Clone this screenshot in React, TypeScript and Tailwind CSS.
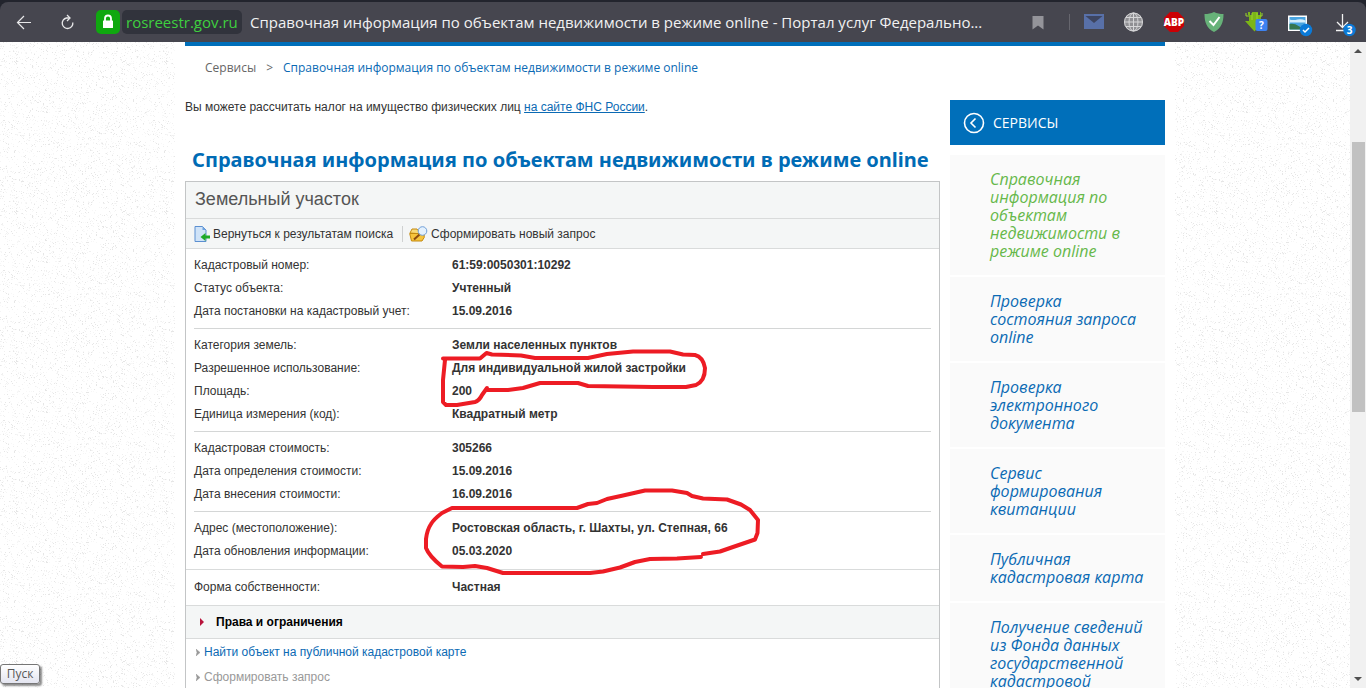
import type { ReactNode } from 'react';

type Row = [label: string, value: string];

const sections: Row[][] = [
  [
    ['Кадастровый номер:', '61:59:0050301:10292'],
    ['Статус объекта:', 'Учтенный'],
    ['Дата постановки на кадастровый учет:', '15.09.2016'],
  ],
  [
    ['Категория земель:', 'Земли населенных пунктов'],
    ['Разрешенное использование:', 'Для индивидуальной жилой застройки'],
    ['Площадь:', '200'],
    ['Единица измерения (код):', 'Квадратный метр'],
  ],
  [
    ['Кадастровая стоимость:', '305266'],
    ['Дата определения стоимости:', '15.09.2016'],
    ['Дата внесения стоимости:', '16.09.2016'],
  ],
  [
    ['Адрес (местоположение):', 'Ростовская область, г. Шахты, ул. Степная, 66'],
    ['Дата обновления информации:', '05.03.2020'],
  ],
];

const services = [
  'Справочная\nинформация по\nобъектам\nнедвижимости в\nрежиме online',
  'Проверка\nсостояния запроса\nonline',
  'Проверка\nэлектронного\nдокумента',
  'Сервис\nформирования\nквитанции',
  'Публичная\nкадастровая карта',
  'Получение сведений\nиз Фонда данных\nгосударственной\nкадастровой',
];

// Speckles for the page background, same tile on every render
const TILE = 150;
const speckles = (() => {
  let seed = 7;
  const next = () => {
    seed = (seed * 16807) % 2147483647;
    return seed / 2147483647;
  };
  return Array.from({ length: 3000 }, () => ({
    x: Math.floor(next() * TILE),
    y: Math.floor(next() * TILE),
    fill: ['#f5f5f5', '#f8f8f8', '#f0f0f0', '#e6e6e6'][Math.floor(next() * 4)],
  }));
})();

const PaperTexture = () => (
  <svg className="absolute inset-0 h-full w-full" aria-hidden="true" shapeRendering="crispEdges">
    <defs>
      <pattern id="paper" width={TILE} height={TILE} patternUnits="userSpaceOnUse">
        {speckles.map((s, i) => (
          <rect key={i} x={s.x} y={s.y} width="1" height="1" fill={s.fill} />
        ))}
      </pattern>
    </defs>
    <rect width="100%" height="100%" fill="url(#paper)" />
  </svg>
);

const BarButton = ({ label, children }: { label: string; children: ReactNode }) => (
  <button type="button" aria-label={label} className="h-6 w-6 shrink-0">
    <svg viewBox="0 0 24 24" className="h-6 w-6 overflow-visible">
      {children}
    </svg>
  </button>
);

const BrowserBar = () => (
  <header className="shrink-0 bg-[#22242d] font-['Open_Sans',sans-serif]">
    <div className="mt-[2px] flex h-10 items-center rounded-t-lg bg-[#46464f] pl-3">
      <BarButton label="Назад">
        <path d="M5.5 12.500H19M12 6 5.5 12.500l6.5 6.500" fill="none" stroke="#e8e8ea" strokeWidth="1.2" />
      </BarButton>
      <div className="ml-5 flex">
        <BarButton label="Обновить">
          <path d="M13.500 8H10.500A5.300 5.300 0 1 0 16.800 12.500" fill="none" stroke="#e8e8ea" strokeWidth="1.3" />
          <path d="M11 5l3 3-3 3" fill="none" stroke="#e8e8ea" strokeWidth="1.3" />
        </BarButton>
      </div>
      <div className="ml-4 flex h-6 w-6 shrink-0 items-center justify-center rounded-[5px] bg-[#0fa80f]">
        <svg viewBox="0 0 24 24" className="h-6 w-6">
          <path d="M9 11V8.500a3 3 0 0 1 6 0V11" fill="none" stroke="#fff" strokeWidth="1.8" />
          <rect x="7" y="10.500" width="10" height="7.500" rx="0.500" fill="#fff" />
        </svg>
      </div>
      <div className="ml-[2px] flex h-6 w-[120px] shrink-0 items-center rounded-[5px] bg-[#31333c] pl-1 text-[15px] text-[#3fcf3f]">
        rosreestr.gov.ru
      </div>
      <div className="ml-2 min-w-0 flex-1 truncate text-[15px] text-[#f1f1f2]">
        Справочная информация по объектам недвижимости в режиме online - Портал услуг Федерально...
      </div>
      <div className="flex shrink-0 items-center pr-2">
        <BarButton label="Закладка">
          <path d="M7.500 6h11v13.500L13 15.500l-5.500 4z" fill="#94949a" />
        </BarButton>
        <div className="mr-3 ml-5 h-4 w-px bg-[#66666e]" />
        <div className="flex items-center gap-[22px]">
          <div className="flex items-center gap-4">
            <BarButton label="Почта">
              <path d="M2 4h20v15H2z" fill="#5870a8" />
              <path d="M3.500 6h17L12 13z" fill="#3d4560" />
            </BarButton>
            <BarButton label="Сеть">
              <circle cx="11.500" cy="12" r="9.500" fill="#8f8f93" />
              <g fill="none" stroke="#d6d6d8" strokeWidth="1">
                <circle cx="11.500" cy="12" r="9" />
                <ellipse cx="11.500" cy="12" rx="4.500" ry="9" />
                <path d="M11.500 3v18M2.500 12h18M4 7.500h15M4 16.500h15" />
              </g>
            </BarButton>
            <BarButton label="Adblock Plus">
              <path d="M8 2h8l6 6v8l-6 6H8l-6-6V8z" fill="#cb0005" />
              <text x="12" y="16" textAnchor="middle" fontSize="10" fontWeight="800" fill="#fff">
                ABP
              </text>
            </BarButton>
            <BarButton label="Защита">
              <path d="M12 2c3 1.500 6 2 9.500 2 0 8-2 14-9.500 18C4.500 18 2.500 12 2.500 4 6 4 9 3.500 12 2z" fill="#67b279" />
              <path d="m7.500 11 4 4 6-8" fill="none" stroke="#fff" strokeWidth="2" />
            </BarButton>
            <BarButton label="Загрузчик">
              <path d="M6 2h2v3h2V2h6v3h2V2h1v9h3l-9.500 10.500L3 11h4V5H6z" fill="#7cb518" />
              <path d="M4 3v3h3M20 3v3h-2M10 3v7M15 3v6" fill="none" stroke="#9bd52c" />
              <rect x="13.500" y="9" width="12" height="12" rx="2" fill="#3d82f0" />
              <text x="19.500" y="18.500" textAnchor="middle" fontSize="10" fontWeight="700" fill="#fff">
                ?
              </text>
            </BarButton>
          </div>
          <BarButton label="Скриншоты">
            <path d="M0 5.500h19V21H0z" fill="#fff" />
            <path d="M1.500 7h16v12.500h-16z" fill="#49a4e0" />
            <path d="M1.500 9.500q4 1 8 0t8 1v2h-16z" fill="#d5edfb" />
            <path d="M1.500 14q5-1 9 2t7 1v2.500h-16z" fill="#357650" />
            <circle cx="18" cy="20" r="6.200" fill="#0b7ad8" />
            <path d="m15 20 2 2 4-4" fill="none" stroke="#fff" strokeWidth="1.500" />
          </BarButton>
          <BarButton label="Загрузки">
            <path d="M8.500 4v13M3 12l5.500 5.500L14 12M2 20.500h9" fill="none" stroke="#f2f2f2" strokeWidth="1.300" />
            <circle cx="15.500" cy="20" r="6.200" fill="#0b7ad8" />
            <text x="15.500" y="23.500" textAnchor="middle" fontSize="10" fontWeight="700" fill="#fff">
              3
            </text>
          </BarButton>
        </div>
      </div>
    </div>
  </header>
);

const Scrollbar = () => (
  <div className="flex w-4 shrink-0 flex-col items-center bg-[#f1f1f1]">
    <svg viewBox="0 0 16 16" className="h-4 w-4">
      <path d="M4 11h8L8 7z" fill="#505050" />
    </svg>
    <div className="h-[84px]" />
    <div className="h-[270px] w-[13px] bg-[#c1c1c1]" />
    <div className="flex-1" />
    <svg viewBox="0 0 16 16" className="h-4 w-4">
      <path d="M4 5h8L8 9z" fill="#505050" />
    </svg>
  </div>
);

// Red marker strokes drawn over the parcel card
const MarkerStrokes = () => (
  <svg className="pointer-events-none absolute inset-0 h-full w-full overflow-visible" aria-hidden="true">
    <g transform="translate(-186 -182)" fill="none" stroke="#ed1c24" strokeWidth="4" strokeLinecap="round" strokeLinejoin="round">
      <path d="M443 358.500H480L486.500 353 492 354.500 521 355.500 535 358H588L607 354 633 351.500H670L683 354.500 695 355Q703 357 705 368 705 381 696 385L686 387H653L588 386 578 383H540L523 388 508 390H487V388L482 395Q479 401 475 402L457 405H446L443 402V380L445 360" />
      <path d="M703 554 720 551.500 733 547 755 539.500 757.500 533 758 520 750 510 741 504.500 727 499.500 703 498.500 692 496 687 493 672 490.500H645L623 495.500 607 499 597 503 588 504 577 508H452L442 513Q434 519 431 524 427 530 426 539V548Q429 556 442 566.500L463 567 475 566 487 568 503 573H590L603 571.500 620 567.500 635 562 650 559 677 558.500 701 557" />
    </g>
  </svg>
);

const DataTable = ({ rows }: { rows: Row[] }) => (
  <table className="w-full table-fixed">
    <tbody>
      {rows.map(([label, value]) => (
        <tr key={label} className="h-[23px]">
          <th scope="row" className="w-[258px] p-0 text-left font-normal">
            {label}
          </th>
          <td className="p-0 font-bold">{value}</td>
        </tr>
      ))}
    </tbody>
  </table>
);

const Bullet = () => (
  <svg viewBox="0 0 4 7" className="h-[7px] w-1">
    <path d="M0 0l4 3.500L0 7l1-3.500z" fill="#999" stroke="#999" strokeWidth="0.500" />
  </svg>
);

const ParcelCard = () => (
  <section className="relative border border-[#c3c5c6] bg-white text-[#333]">
    <h2 className="border-b border-[#d9dbdb] bg-[#f4f6f6] pb-[2px] pl-[9px] text-[18px] leading-[34px] text-[#555]">
      Земельный участок
    </h2>
    <div className="box-content flex h-[29px] items-center border-b border-[#d9dbdb] bg-[#f4f6f6] pl-2">
      <button type="button" className="flex items-center gap-[3px]">
        <svg viewBox="0 0 16 16" className="h-4 w-4">
          <path d="M1 .500h7.500L12 4v11.500H1z" fill="#cfe3f8" stroke="#5b8fd0" />
          <path d="M8.500.500V4H12z" fill="#6fa3de" />
          <path d="M16 9.500v3h-4.500V15L6.500 11l5-4v2.500z" fill="#1faa28" />
        </svg>
        Вернуться к результатам поиска
      </button>
      <div className="mr-[6px] ml-[9px] h-4 w-px bg-[#cfd1d1]" />
      <button type="button" className="flex items-center gap-[3px]">
        <svg viewBox="0 0 19 16" className="h-4 w-[19px]">
          <path d="M1 7 3 3h5l1 1.500h5V8z" fill="#f7d978" stroke="#c48a10" />
          <path d="M.700 7.500h14.500v4L13 15H2.500z" fill="#f6c43c" stroke="#c48a10" />
          <path d="M10.500 8.500 5 13.500" stroke="#8a4a10" strokeWidth="2" />
          <circle cx="13.500" cy="5" r="4.300" fill="#e4f1fd" stroke="#6f9fd8" />
        </svg>
        Сформировать новый запрос
      </button>
    </div>

    <div className="px-2">
      {sections.map((rows, i) => (
        <div key={i} className="border-b border-[#d4d6d6] pt-1 pb-[6px] last:border-b-0 last:pb-[7px]">
          <DataTable rows={rows} />
        </div>
      ))}
    </div>
    <div className="border-t border-[#d9dbdb] px-2 pt-[5px] pb-[7px]">
      <DataTable rows={[['Форма собственности:', 'Частная']]} />
    </div>

    <button
      type="button"
      className="box-content flex h-8 w-full items-center border-y border-[#d9dbdb] bg-[#f4f6f6] font-bold text-black"
    >
      <svg viewBox="0 0 4 8" className="mr-3 ml-[14px] h-2 w-1">
        <path d="M0 0l4 4-4 4z" fill="#b8143c" />
      </svg>
      Права и ограничения
    </button>
    <ul className="pt-px pl-[10px] leading-[25px]">
      <li className="flex items-center gap-1">
        <Bullet />
        <a href="#map" className="text-[#0b6ab4]">
          Найти объект на публичной кадастровой карте
        </a>
      </li>
      <li className="flex items-center gap-1 text-[#999]">
        <Bullet />
        Сформировать запрос
      </li>
    </ul>
    <MarkerStrokes />
  </section>
);

const Sidebar = () => (
  <aside className="mt-[54px] w-[215px] shrink-0 font-['Open_Sans',sans-serif]">
    <div className="flex h-[45px] items-center bg-[#006fba] pl-[13px] text-[14px] text-white">
      <svg viewBox="0 0 22 22" className="mr-2 h-[22px] w-[22px]" fill="none" stroke="#fff">
        <circle cx="11" cy="11" r="9.500" strokeWidth="1.600" />
        <path d="M12.500 6.500 8 11l4.500 4.500" strokeWidth="1.600" />
      </svg>
      СЕРВИСЫ
    </div>
    <nav className="mt-[10px] flex flex-col gap-[2px]">
      {services.map((name, i) => (
        <a
          key={name}
          href="#service"
          className={`bg-[#fafafa] py-[15px] pl-10 text-[16px] leading-[18px] whitespace-pre italic ${
            i === 0 ? 'text-[#66b84a]' : 'text-[#0b6ab4]'
          }`}
        >
          {name}
        </a>
      ))}
    </nav>
  </aside>
);

const App = () => {
  return (
    <div className="flex h-screen flex-col overflow-hidden bg-[#22242d]">
      <BrowserBar />
      <div className="flex min-h-0 flex-1 bg-white">
        <div className="relative min-w-0 flex-1 overflow-hidden">
          <PaperTexture />
          <div className="relative mx-auto min-h-full max-w-[1000px] bg-white px-[10px]">
            <div className="h-1 bg-[#006fba]" />
            <div className="flex gap-[10px]">
              <main className="min-w-0 flex-1 font-['Liberation_Sans',Arial,sans-serif] text-[12px] text-[#333]">
                <nav className="mt-3 flex gap-[10px] pl-5 font-['Open_Sans',sans-serif] leading-5 text-[#666]">
                  <a href="#services">Сервисы</a>
                  <span>&gt;</span>
                  <a href="#online" className="text-[#0b6ab4]">
                    Справочная информация по объектам недвижимости в режиме online
                  </a>
                </nav>
                <p className="mt-[19px] leading-5">
                  Вы можете рассчитать налог на имущество физических лиц{' '}
                  <a href="#fns" className="text-[#0b6ab4] underline">
                    на сайте ФНС России
                  </a>
                  .
                </p>
                <h1 className="mt-7 mb-[6px] pl-[7px] font-['Noto_Sans',sans-serif] text-[20px] leading-[30px] font-bold whitespace-nowrap text-[#006bb5]">
                  Справочная информация по объектам недвижимости в режиме online
                </h1>
                <ParcelCard />
              </main>
              <Sidebar />
            </div>
          </div>
          <div className="absolute bottom-1 left-0 flex h-5 w-10 items-center justify-center rounded-[3px] border border-[#767676] bg-linear-to-b from-white to-[#e4e5f0] font-['Open_Sans',sans-serif] text-[12px] text-[#575757] shadow-[2px_2px_2px_rgba(0,0,0,0.45)]">
            Пуск
          </div>
        </div>
        <Scrollbar />
      </div>
    </div>
  );
};

export default App;
